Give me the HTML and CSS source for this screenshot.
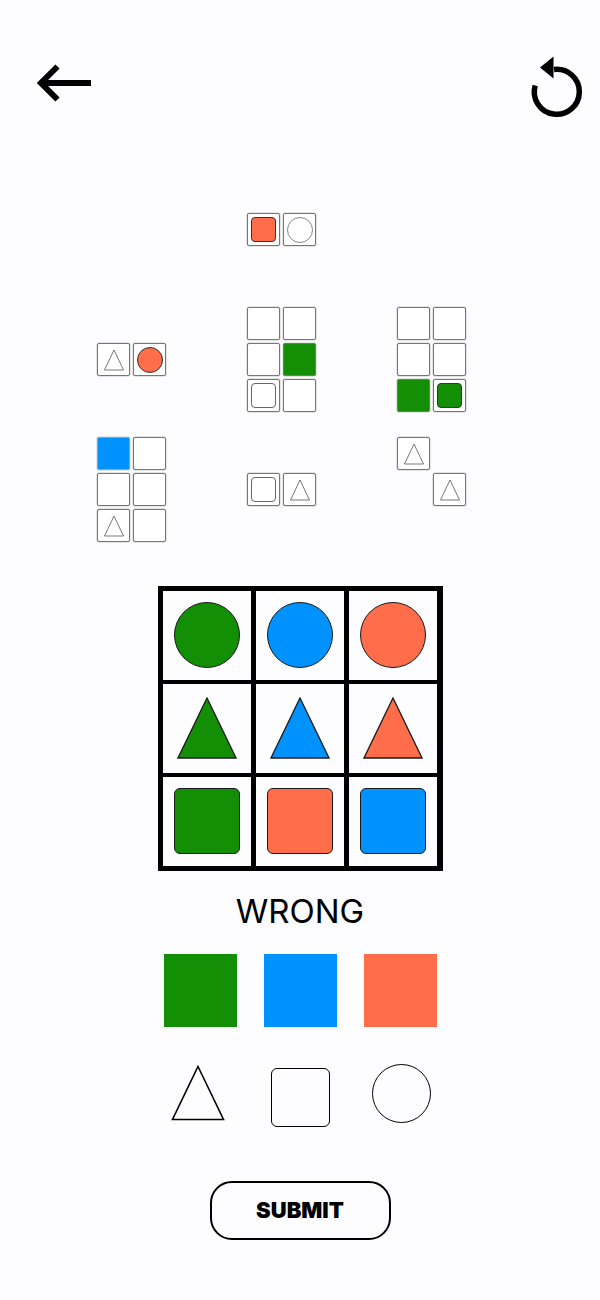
FILE: index.html
```html
<!DOCTYPE html>
<html lang="en">

<head>
    <meta charset="UTF-8">
    <meta name="viewport" content="width=device-width, initial-scale=1.0">
    <title>Shape Puzzle</title>
    <link rel="stylesheet" href="styles.css">
</head>

<body>
    <div class="header">
        <button class="iconButton backButton" aria-label="Back">
            <svg width="62" height="46" viewBox="0 0 62 46">
                <path d="M8 23H57M23.5 6.5L7 23L23.5 39.5" fill="none" stroke="#000" stroke-width="6" />
            </svg>
        </button>
        <button class="iconButton resetButton" aria-label="Reset">
            <svg width="60" height="70" viewBox="0 0 60 70">
                <path d="M27 17.5A22.5 22.5 0 1 1 8.2 33.5" fill="none" stroke="#000" stroke-width="5.5" />
                <path d="M13 15.5L26.5 4.5V26.5Z" fill="#000" />
            </svg>
        </button>
    </div>

    <div class="pieces">
        <div class="slot"></div>
        <div class="slot">
            <div class="cell r2 c1"><span class="mini square orange"></span></div>
            <div class="cell r2 c2"><span class="mini circle outline"></span></div>
        </div>
        <div class="slot"></div>

        <div class="slot">
            <div class="cell r2 c1"><svg class="miniTri" viewBox="0 0 22 22"><path d="M11 1L20.5 21H1.5Z" /></svg></div>
            <div class="cell r2 c2"><span class="mini circle orange"></span></div>
        </div>
        <div class="slot">
            <div class="cell r1 c1"></div>
            <div class="cell r1 c2"></div>
            <div class="cell r2 c1"></div>
            <div class="cell r2 c2 fillGreen"></div>
            <div class="cell r3 c1"><span class="mini square outline"></span></div>
            <div class="cell r3 c2"></div>
        </div>
        <div class="slot">
            <div class="cell r1 c1"></div>
            <div class="cell r1 c2"></div>
            <div class="cell r2 c1"></div>
            <div class="cell r2 c2"></div>
            <div class="cell r3 c1 fillGreen"></div>
            <div class="cell r3 c2"><span class="mini square green"></span></div>
        </div>

        <div class="slot">
            <div class="cell r1 c1 fillBlue"></div>
            <div class="cell r1 c2"></div>
            <div class="cell r2 c1"></div>
            <div class="cell r2 c2"></div>
            <div class="cell r3 c1"><svg class="miniTri" viewBox="0 0 22 22"><path d="M11 1L20.5 21H1.5Z" /></svg></div>
            <div class="cell r3 c2"></div>
        </div>
        <div class="slot">
            <div class="cell r2 c1"><span class="mini square outline"></span></div>
            <div class="cell r2 c2"><svg class="miniTri" viewBox="0 0 22 22"><path d="M11 1L20.5 21H1.5Z" /></svg></div>
        </div>
        <div class="slot">
            <div class="cell r1 c1"><svg class="miniTri" viewBox="0 0 22 22"><path d="M11 1L20.5 21H1.5Z" /></svg></div>
            <div class="cell r2 c2"><svg class="miniTri" viewBox="0 0 22 22"><path d="M11 1L20.5 21H1.5Z" /></svg></div>
        </div>
    </div>

    <div class="board">
        <div class="boardCell"><span class="bigShape circle green"></span></div>
        <div class="boardCell"><span class="bigShape circle blue"></span></div>
        <div class="boardCell"><span class="bigShape circle orange"></span></div>
        <div class="boardCell"><svg class="bigTri" viewBox="0 0 60 62"><path d="M30 1L59 61H1Z" fill="#128f04" /></svg></div>
        <div class="boardCell"><svg class="bigTri" viewBox="0 0 60 62"><path d="M30 1L59 61H1Z" fill="#0092ff" /></svg></div>
        <div class="boardCell"><svg class="bigTri" viewBox="0 0 60 62"><path d="M30 1L59 61H1Z" fill="#ff6d4b" /></svg></div>
        <div class="boardCell"><span class="bigShape square green"></span></div>
        <div class="boardCell"><span class="bigShape square orange"></span></div>
        <div class="boardCell"><span class="bigShape square blue"></span></div>
    </div>

    <div id="status">WRONG</div>

    <div class="choices">
        <button class="swatch green" aria-label="Green"></button>
        <button class="swatch blue" aria-label="Blue"></button>
        <button class="swatch orange" aria-label="Orange"></button>
    </div>

    <div class="choices shapeChoices">
        <button class="shapeChoice" aria-label="Triangle">
            <svg width="54" height="56" viewBox="0 0 54 56"><path d="M27 1.5L52.5 54.5H1.5Z" fill="none" stroke="#000" stroke-width="1.6" /></svg>
        </button>
        <button class="shapeChoice" aria-label="Square"><span class="outlineSquare"></span></button>
        <button class="shapeChoice" aria-label="Circle"><span class="outlineCircle"></span></button>
    </div>

    <button id="submitButton">SUBMIT</button>
</body>

</html>
```

FILE: styles.css
```css
body {
    font-family: Inter, "Liberation Sans", sans-serif;
    margin: 0;
    background-color: #fdfcfe;
    color: #000;
}

button {
    font-family: inherit;
    background: none;
    border: none;
    padding: 0;
    cursor: pointer;
}

.header {
    display: flex;
    justify-content: space-between;
    align-items: flex-start;
    padding: 52px 13px 0 34px;
    height: 125px;
}

.iconButton svg {
    display: block;
}

.backButton {
    margin-top: 8px;
}

/* pieces */

.pieces {
    display: grid;
    grid-template-columns: repeat(3, 70px);
    grid-auto-rows: 106px;
    column-gap: 80px;
    row-gap: 24px;
    margin-left: 97px;
}

.slot {
    display: grid;
    grid-template-columns: repeat(2, 33px);
    grid-template-rows: repeat(3, 33px);
    gap: 3px;
}

.cell {
    box-sizing: border-box;
    border: 1px solid #777;
    border-radius: 2px;
    background-color: #fff;
    box-shadow: 0 0 0 0.5px #ccc;
    display: flex;
    align-items: center;
    justify-content: center;
}

.r1 { grid-row: 1; }
.r2 { grid-row: 2; }
.r3 { grid-row: 3; }
.c1 { grid-column: 1; }
.c2 { grid-column: 2; }

.fillGreen {
    background-color: #128f04;
}

.fillBlue {
    background-color: #0092ff;
    border-color: #6ab0e6;
}

.mini {
    box-sizing: border-box;
    width: 25px;
    height: 25px;
    border: 1px solid #333;
}

.mini.square {
    border-radius: 4px;
}

.mini.circle {
    width: 26px;
    height: 26px;
    border-radius: 50%;
}

.mini.outline {
    border-color: #888;
    background-color: #fff;
}

.mini.square.outline {
    border-color: #666;
}

.miniTri {
    width: 22px;
    height: 22px;
    fill: none;
    stroke: #555;
    stroke-width: 0.8;
}

.green { background-color: #128f04; }
.blue { background-color: #0092ff; }
.orange { background-color: #ff6d4b; }

/* board */

.board {
    width: 285px;
    box-sizing: border-box;
    margin: 43px auto 0;
    border: 5px solid #000;
    background-color: #000;
    display: grid;
    grid-template-columns: repeat(3, 1fr);
    grid-auto-rows: 88.5px;
    gap: 4.5px;
}

.boardCell {
    background-color: #fdfcfe;
    display: flex;
    align-items: center;
    justify-content: center;
}

.bigShape {
    box-sizing: border-box;
    width: 66px;
    height: 66px;
    border: 1.3px solid #1a1a1a;
}

.bigShape.circle {
    border-radius: 50%;
}

.bigShape.square {
    border-radius: 6px;
}

.bigTri {
    width: 60px;
    height: 62px;
}

.bigTri path {
    stroke: #1a1a1a;
    stroke-width: 1.3;
}

#status {
    text-align: center;
    font-size: 33px;
    line-height: 40px;
    margin-top: 20px;
}

/* choices */

.choices {
    display: grid;
    grid-template-columns: repeat(3, 100px);
    justify-content: center;
    justify-items: center;
    align-items: center;
    margin-top: 23px;
}

.swatch {
    width: 73px;
    height: 73px;
}

.shapeChoices {
    margin-top: 33px;
    height: 64px;
}

.shapeChoice svg {
    display: block;
}

.shapeChoice:first-child {
    margin-right: 4px;
}

.outlineSquare {
    display: block;
    box-sizing: border-box;
    width: 59px;
    height: 59px;
    border: 1.6px solid #000;
    border-radius: 6px;
    margin-top: 8px;
}

.outlineCircle {
    display: block;
    box-sizing: border-box;
    width: 59px;
    height: 59px;
    border: 1.6px solid #000;
    border-radius: 50%;
    margin-left: 3px;
}

#submitButton {
    display: block;
    width: 181px;
    height: 59px;
    margin: 57px auto 0;
    box-sizing: border-box;
    border: 2px solid #000;
    border-radius: 22px;
    font-size: 22px;
    font-weight: 900;
    color: #000;
}
```
